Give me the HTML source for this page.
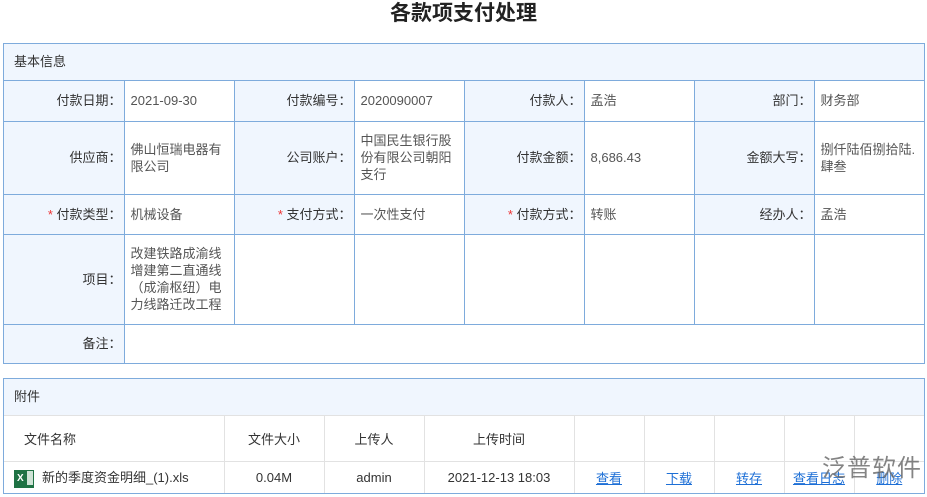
<!DOCTYPE html><html><head><meta charset="utf-8"><style>
*{margin:0;padding:0;box-sizing:border-box}
body{width:927px;height:497px;background:#fff;font-family:"Liberation Sans","Noto Sans CJK SC",sans-serif;font-size:13px;color:#333;position:relative;overflow:hidden}
.t{position:absolute;top:0;left:0;width:927px;text-align:center;font-size:21px;font-weight:bold;line-height:28px;color:#222}
.box{position:absolute;left:3px;width:922px;border:1px solid #7eabdc}
.hd{background:#f0f6fe;padding-left:10px;color:#333}
table{border-collapse:collapse;width:100%;table-layout:fixed}
.f td{border:1px solid #7eabdc;vertical-align:middle;line-height:17px}
.f td.l{background:#f0f6fe;text-align:right;padding-right:2px}
.f td.v{padding-left:6px;color:#555}
.f tr:first-child td{border-top:none}
.f td:first-child{border-left:none}.f td:last-child{border-right:none}
.f tr:last-child td{border-bottom:none}
.r{color:#e33}
.a td{border:1px solid #e2e2e2;text-align:center;color:#333}
.a tr:first-child td{border-top:none}.a td:first-child{border-left:none}.a td:last-child{border-right:none}.a tr:last-child td{border-bottom:none}
.lk{color:#1d6fd6;text-decoration:underline}
</style></head><body>
<div class="t">各款项支付处理</div>
<div class="box" style="top:43px">
<div class="hd" style="height:37px;line-height:36px;border-bottom:1px solid #7eabdc">基本信息</div>
<table class="f">
<colgroup><col style="width:120px"><col style="width:110px"><col style="width:120px"><col style="width:110px"><col style="width:120px"><col style="width:110px"><col style="width:120px"><col></colgroup>
<tr style="height:40px"><td class="l">付款日期：</td><td class="v">2021-09-30</td><td class="l">付款编号：</td><td class="v">2020090007</td><td class="l">付款人：</td><td class="v">孟浩</td><td class="l">部门：</td><td class="v">财务部</td></tr>
<tr style="height:73px"><td class="l">供应商：</td><td class="v">佛山恒瑞电器有限公司</td><td class="l">公司账户：</td><td class="v">中国民生银行股份有限公司朝阳支行</td><td class="l">付款金额：</td><td class="v">8,686.43</td><td class="l">金额大写：</td><td class="v">捌仟陆佰捌拾陆.肆叁</td></tr>
<tr style="height:40px"><td class="l"><span class="r">* </span>付款类型：</td><td class="v">机械设备</td><td class="l"><span class="r">* </span>支付方式：</td><td class="v">一次性支付</td><td class="l"><span class="r">* </span>付款方式：</td><td class="v">转账</td><td class="l">经办人：</td><td class="v">孟浩</td></tr>
<tr style="height:90px"><td class="l">项目：</td><td class="v">改建铁路成渝线增建第二直通线（成渝枢纽）电力线路迁改工程</td><td class="v"></td><td class="v"></td><td class="v"></td><td class="v"></td><td class="v"></td><td class="v"></td></tr>
<tr style="height:39px"><td class="l">备注：</td><td class="v" colspan="7"></td></tr>
</table></div>
<div class="box" style="top:378px">
<div class="hd" style="height:37px;line-height:36px;border-bottom:1px solid #e2e2e2">附件</div>
<table class="a">
<colgroup><col style="width:220px"><col style="width:100px"><col style="width:100px"><col style="width:150px"><col style="width:70px"><col style="width:70px"><col style="width:70px"><col style="width:70px"><col></colgroup>
<tr style="height:45px"><td style="text-align:left;padding-left:20px">文件名称</td><td>文件大小</td><td>上传人</td><td>上传时间</td><td></td><td></td><td></td><td></td><td></td></tr>
<tr style="height:32px"><td style="text-align:left;padding-left:10px"><span style="display:inline-block;vertical-align:middle;width:20px;height:18px;background:#1f7244;color:#fff;font-size:10px;font-weight:bold;line-height:18px;text-align:left;padding-left:3px;margin-right:8px">X<span style="display:inline-block;width:6px;height:14px;background:#cfe3d6;margin-left:3px;vertical-align:middle"></span></span>新的季度资金明细_(1).xls</td><td>0.04M</td><td>admin</td><td>2021-12-13 18:03</td><td><span class="lk">查看</span></td><td><span class="lk">下载</span></td><td><span class="lk">转存</span></td><td><span class="lk">查看日志</span></td><td><span class="lk">删除</span></td></tr>
</table></div>
<div style="position:absolute;left:822px;top:448px;font-size:24px;color:#666;opacity:.8;letter-spacing:1px">泛普软件</div>
</body></html>
